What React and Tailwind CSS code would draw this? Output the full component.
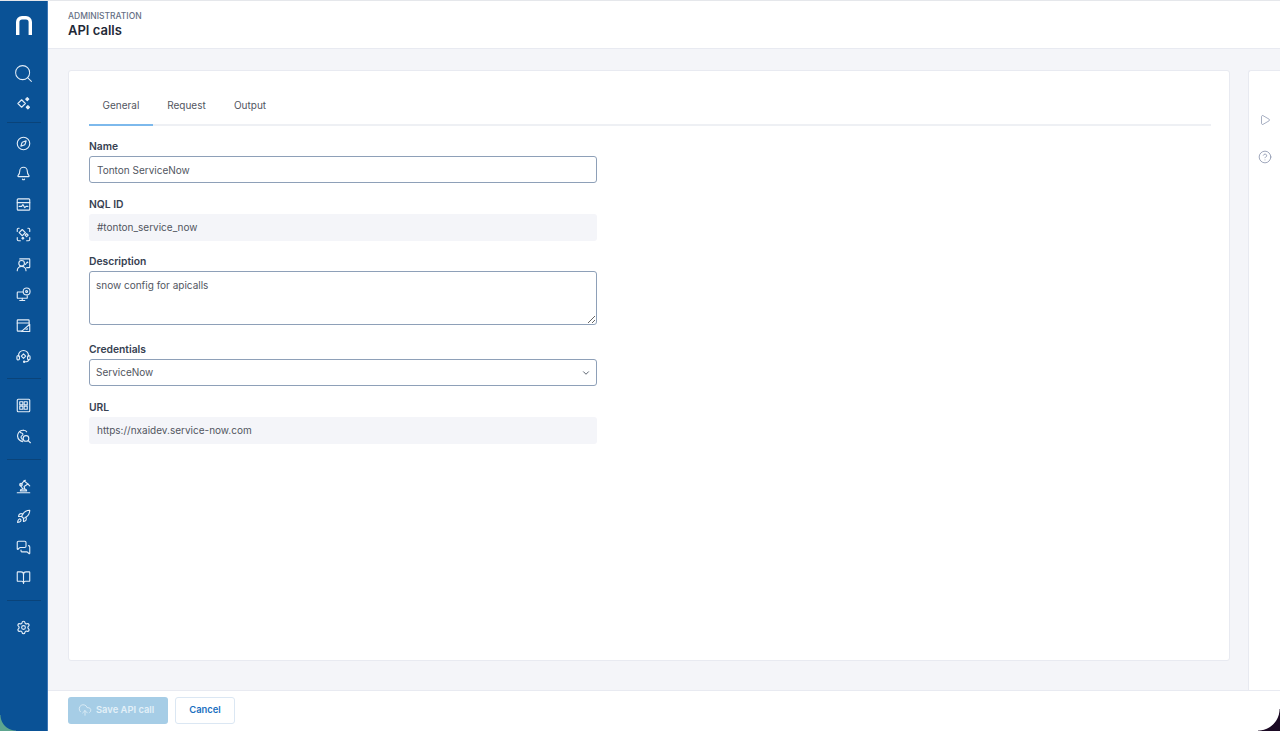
import {
  Search,
  Compass,
  Bell,
  Rocket,
  MessagesSquare,
  BookOpen,
  Settings,
  ChevronDown,
  CloudUpload,
  Play,
  CircleHelp,
} from "lucide-react";

const stroke = {
  fill: "none",
  stroke: "currentColor",
  strokeWidth: 1.8,
  strokeLinecap: "round",
  strokeLinejoin: "round",
};

const Svg = ({ children }) => (
  <svg width="15" height="15" viewBox="0 0 24 24" {...stroke}>
    {children}
  </svg>
);

const Diamond = ({ x, y, r, fill }) => (
  <path
    d={`M${x} ${y - r}L${x + r} ${y}L${x} ${y + r}L${x - r} ${y}Z`}
    fill={fill ? "currentColor" : "none"}
  />
);

const SparkIcon = () => (
  <Svg>
    <Diamond x={9} y={12} r={6} />
    <Diamond x={18} y={5} r={2.5} fill />
    <Diamond x={19} y={18} r={2.5} fill />
  </Svg>
);

const BoardIcon = () => (
  <Svg>
    <rect x="2" y="3" width="20" height="18" rx="1.5" />
    <path d="M2 9h20M5 15h4l2-3 3 5 2-2h3" />
  </Svg>
);

const ScanIcon = () => (
  <Svg>
    <path d="M2 7V4a2 2 0 0 1 2-2h1M19 2h1a2 2 0 0 1 2 2v3M2 17v3a2 2 0 0 0 2 2h3M22 17v3a2 2 0 0 1-2 2h-3" />
    <Diamond x={10} y={9} r={5} />
    <Diamond x={17} y={13} r={2.5} />
    <Diamond x={11} y={18} r={1.5} fill />
  </Svg>
);

const PresenterIcon = () => (
  <Svg>
    <path d="M6 3h15a1 1 0 0 1 1 1v12a1 1 0 0 1-1 1h-4" />
    <path d="M15 12l3-4 1 1" />
    <circle cx="9" cy="10" r="4.500" />
    <path d="M2 22c0-4 3-7 7-7s7 3 7 7" />
  </Svg>
);

const MonitorGearIcon = () => (
  <Svg>
    <path d="M11 8H3a1 1 0 0 0-1 1v8a1 1 0 0 0 1 1h14a1 1 0 0 0 1-1v-3" />
    <path d="M6 21.500h8M10 18v3" />
    <circle cx="17" cy="7" r="5.500" />
    <circle cx="17" cy="7" r="1.500" />
  </Svg>
);

const WindowRulerIcon = () => (
  <Svg>
    <path d="M10 21H3a1 1 0 0 1-1-1V4a1 1 0 0 1 1-1h17a1 1 0 0 1 1 1v6" />
    <path d="M2 8h19" />
    <path d="M22 10v11.500H9Z" />
    <path d="M18 17v1h-2" />
  </Svg>
);

const HeadsetIcon = () => (
  <Svg>
    <path d="M4 13v-1a8 8 0 0 1 16 0v1" />
    <rect x="1.500" y="12" width="4" height="7" rx="2" />
    <rect x="18.500" y="12" width="4" height="7" rx="2" />
    <path d="M20 19c0 2-2 3-5 3" />
    <circle cx="13" cy="22" r="1" />
    <Diamond x={12} y={13} r={3.500} />
  </Svg>
);

const GridIcon = () => (
  <Svg>
    <rect x="2" y="2" width="20" height="20" rx="1.500" />
    <rect x="6" y="6" width="5" height="5" />
    <rect x="13" y="6" width="5" height="5" />
    <rect x="6" y="13" width="5" height="5" />
    <rect x="13" y="13" width="5" height="5" />
  </Svg>
);

const GlobeSearchIcon = () => (
  <Svg>
    <path d="M12 2a9 9 0 0 0-6 16c1.500 1.300 3 2 5 2.400" />
    <path d="M6 4c1 3 4 2 5 4s-3 3-3 5 3 2 2 5" />
    <path d="M12 2c2 0 4 1 5 2.500" />
    <circle cx="16" cy="15" r="4.500" />
    <path d="M19.500 18.500L23 22" />
  </Svg>
);

const ArmIcon = () => (
  <Svg>
    <path d="M2 22h20" />
    <path d="M7 19a5 3 0 0 1 10 0Z" />
    <path d="M11 16l-4-6 6-7 6 5-6 4 1 4" />
    <circle cx="8" cy="9" r="2" />
    <path d="M19 8l3 3M13 3l2-1" />
  </Svg>
);

const iconClass = "h-[15px] w-[15px]";

const NavItem = ({ children }) => (
  <div className="flex h-[30.3px] w-full shrink-0 items-center justify-center text-[#e3edf7]">
    {children}
  </div>
);

const Divider = () => (
  <div className="mt-[3.5px] mb-[5.5px] h-px w-[34px] shrink-0 bg-[#0a4379]" />
);

const WideDivider = () => (
  <div className="mt-[7.5px] mb-[11.5px] h-px w-[34px] shrink-0 bg-[#0a4379]" />
);

const Sidebar = () => (
  <aside className="flex w-12 shrink-0 flex-col items-center border-r border-[#3e77b5] bg-[#0a5296] pt-[15px]">
    <svg width="16" height="19" viewBox="0 0 16 19" className="shrink-0">
      <path
        d="M1.700 19V6a4.300 4.300 0 0 1 4.300-4.300h4A4.300 4.300 0 0 1 14.300 6v13"
        fill="none"
        stroke="#fff"
        strokeWidth="3.400"
      />
    </svg>
    <div className="mt-[29px] flex h-[18px] items-center text-[#e3edf7]">
      <Search size={21} strokeWidth={1.15} />
    </div>
    <div className="mt-[6px] w-full">
      <NavItem>
        <SparkIcon />
      </NavItem>
    </div>
    <Divider />
    <NavItem>
      <Compass className={iconClass} strokeWidth={1.8} />
    </NavItem>
    <NavItem>
      <Bell className={iconClass} strokeWidth={1.8} />
    </NavItem>
    <NavItem>
      <BoardIcon />
    </NavItem>
    <NavItem>
      <ScanIcon />
    </NavItem>
    <NavItem>
      <PresenterIcon />
    </NavItem>
    <NavItem>
      <MonitorGearIcon />
    </NavItem>
    <NavItem>
      <WindowRulerIcon />
    </NavItem>
    <NavItem>
      <HeadsetIcon />
    </NavItem>
    <WideDivider />
    <NavItem>
      <GridIcon />
    </NavItem>
    <NavItem>
      <GlobeSearchIcon />
    </NavItem>
    <WideDivider />
    <NavItem>
      <ArmIcon />
    </NavItem>
    <NavItem>
      <Rocket className={iconClass} strokeWidth={1.8} />
    </NavItem>
    <NavItem>
      <MessagesSquare className={iconClass} strokeWidth={1.8} />
    </NavItem>
    <NavItem>
      <BookOpen className={iconClass} strokeWidth={1.8} />
    </NavItem>
    <WideDivider />
    <NavItem>
      <Settings className={iconClass} strokeWidth={1.8} />
    </NavItem>
  </aside>
);

const Label = ({ children }) => (
  <label className="mb-[3px] block text-[10.3px] leading-[14px] font-semibold text-[#374151]">
    {children}
  </label>
);

const fieldClass =
  "block w-full rounded-[3px] border border-[#8ea0b8] bg-white text-[10px] text-[#52565f] outline-none";

const ReadOnly = ({ value }) => (
  <div className="flex h-[27px] w-full items-center rounded-[3px] bg-[#f4f5f9] px-2 text-[10px] text-[#52565f]">
    {value}
  </div>
);

const Tabs = () => (
  <div className="flex h-[38px] border-b-2 border-[#eef0f4]">
    <div className="-mb-[2px] flex h-[38px] w-[64px] items-center justify-center border-b-2 border-[#7db9ec] pb-[2px] text-[10px] text-[#52565f]">
      General
    </div>
    <div className="flex w-[67px] items-center justify-center pb-[2px] text-[10px] text-[#52565f]">
      Request
    </div>
    <div className="flex w-[60px] items-center justify-center pb-[2px] text-[10px] text-[#52565f]">
      Output
    </div>
  </div>
);

const GeneralForm = () => (
  <form className="flex w-[508px] flex-col">
    <div className="mt-[13px]">
      <Label>Name</Label>
      <input
        readOnly
        value="Tonton ServiceNow"
        className={`${fieldClass} h-[27px] px-[7px]`}
      />
    </div>
    <div className="mt-[14px]">
      <Label>NQL ID</Label>
      <ReadOnly value="#tonton_service_now" />
    </div>
    <div className="mt-[13px]">
      <Label>Description</Label>
      <textarea
        readOnly
        value="snow config for apicalls"
        className={`${fieldClass} h-[54px] px-[6px] py-[6px] leading-[14px]`}
      />
    </div>
    <div className="mt-[17px]">
      <Label>Credentials</Label>
      <div className={`${fieldClass} flex h-[27px] items-center justify-between pr-[5px] pl-[6px]`}>
        <span>ServiceNow</span>
        <ChevronDown size={10} strokeWidth={2.2} className="text-[#4b5563]" />
      </div>
    </div>
    <div className="mt-[14px]">
      <Label>URL</Label>
      <ReadOnly value="https://nxaidev.service-now.com" />
    </div>
  </form>
);

const App = () => {
  return (
    <div className="relative flex h-[731px] w-[1280px] overflow-hidden border-t border-[#e5e7eb] bg-white font-['Inter',sans-serif]">
      <Sidebar />
      <div className="flex min-w-0 flex-1 flex-col">
        <header className="h-[48px] shrink-0 border-b border-[#e8eaf1] bg-white pt-[10px] pl-5">
          <div className="text-[8.5px] leading-[11px] font-medium text-[#667085]">
            ADMINISTRATION
          </div>
          <h1 className="text-[13px] leading-[17px] font-semibold text-[#1f2937]">
            API calls
          </h1>
        </header>

        <main className="flex min-h-0 flex-1 bg-[#f4f5f9]">
          <section className="mt-[21px] mr-[18px] mb-[29px] ml-5 min-w-0 flex-1 rounded-[3px] border border-[#e8eaf1] bg-white pt-[17px] pr-[18px] pl-5">
            <Tabs />
            <GeneralForm />
          </section>
          <div className="mt-[21px] flex w-[32px] shrink-0 flex-col items-center gap-[24px] rounded-tl-[3px] border-t border-l border-[#e8eaf1] bg-white pt-[43px] text-[#8a94ad]">
            <Play size={12} strokeWidth={1.5} />
            <CircleHelp size={14} strokeWidth={1.4} />
          </div>
        </main>

        <footer className="flex h-[41px] shrink-0 items-center gap-[7px] border-t border-[#e8eaf1] bg-white pb-[2px] pl-5">
          <button
            type="button"
            className="flex h-[27px] w-[100px] items-center gap-[4px] rounded-[3px] bg-[#a6cde6] pl-[10px] text-[9.4px] font-semibold text-[#e3f0f8]"
          >
            <CloudUpload size={14} strokeWidth={1.4} />
            Save API call
          </button>
          <button
            type="button"
            className="h-[27px] w-[60px] rounded-[3px] border border-[#dbe7f3] bg-white text-[9.4px] font-semibold text-[#1a6fc0]"
          >
            Cancel
          </button>
        </footer>
      </div>
      <div className="absolute right-0 bottom-0 h-[22px] w-[22px] bg-[radial-gradient(circle_22px_at_0_0,transparent_96%,#1b0a24_100%)]" />
      <div className="absolute bottom-0 left-0 h-4 w-4 bg-[radial-gradient(circle_16px_at_100%_0,transparent_94%,#5da58f_100%)]" />
    </div>
  );
};

export default App;
